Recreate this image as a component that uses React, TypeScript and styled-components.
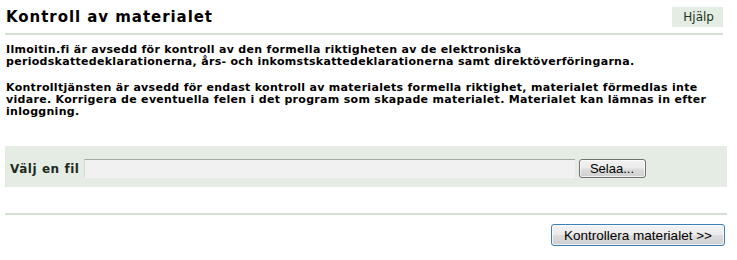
import styled, { createGlobalStyle } from 'styled-components'

const GlobalStyle = createGlobalStyle`
  html, body {
    margin: 0;
    padding: 0;
    background: #ffffff;
  }
  body {
    font-family: "DejaVu Sans", Verdana, sans-serif;
    color: #000;
  }
`

const App = () => {
  return (
    <>
      <GlobalStyle />
      <Page>
        <Header>
          <Title>Kontroll av materialet</Title>
          <HelpLink>Hjälp</HelpLink>
        </Header>
        <Text>
          Ilmoitin.fi är avsedd för kontroll av den formella riktigheten av de elektroniska
          <br />
          periodskattedeklarationerna, års- och inkomstskattedeklarationerna samt direktöverföringarna.
        </Text>
        <Text>
          Kontrolltjänsten är avsedd för endast kontroll av materialets formella riktighet, materialet förmedlas inte
          <br />
          vidare. Korrigera de eventuella felen i det program som skapade materialet. Materialet kan lämnas in efter
          <br />
          inloggning.
        </Text>
        <FileBox>
          <Label>Välj en fil</Label>
          <FileField />
          <Button>Selaa...</Button>
        </FileBox>
        <Divider />
        <Actions>
          <Button $wide>Kontrollera materialet &gt;&gt;</Button>
        </Actions>
      </Page>
    </>
  )
}

const Page = styled.div`
  width: 722px;
  padding: 7px 0 0 5px;
`

const Header = styled.div`
  display: flex;
  justify-content: space-between;
  align-items: center;
  border-bottom: 2px solid #d2dfd2;
  padding: 0 0 6px 1px;
  margin-right: 4px;
`

const Title = styled.h1`
  margin: 0;
  font-size: 15px;
  font-weight: bold;
  letter-spacing: 0.95px;
  line-height: 20px;
`

const HelpLink = styled.span`
  background: #e3ede3;
  color: #1f3322;
  font-size: 12px;
  line-height: 20px;
  padding: 0 9px 0 11px;
`

const Text = styled.p`
  margin: 9px 0 0 1px;
  font-size: 11px;
  font-weight: bold;
  line-height: 12px;
  letter-spacing: 0.3px;
  white-space: nowrap;
  & + & {
    margin-top: 14px;
  }
`

const FileBox = styled.div`
  display: flex;
  align-items: center;
  gap: 4px;
  margin-top: 28px;
  background: #e4ece4;
  height: 41px;
  padding: 4px 0 0 5px;
  box-sizing: border-box;
`

const Label = styled.span`
  font-size: 12px;
  font-weight: bold;
  color: #1c2a1e;
  letter-spacing: 0.55px;
`

const FileField = styled.div`
  width: 491px;
  height: 19px;
  background: #f1f1f1;
  border-top: 1px solid #a8a8a8;
  border-left: 1px solid #d8d8d8;
  border-bottom: 1px solid #f4f4f4;
  box-sizing: border-box;
`

const Button = styled.button<{ $wide?: boolean }>`
  font-family: "Liberation Sans", Arial, sans-serif;
  font-size: ${p => (p.$wide ? '13.5px' : '13px')};
  color: #000;
  height: ${p => (p.$wide ? '22px' : '19px')};
  width: ${p => (p.$wide ? '174px' : '67px')};
  padding: 0;
  border: 1px solid ${p => (p.$wide ? '#3c7fb1' : '#707070')};
  border-radius: 3px;
  background: linear-gradient(#f2f2f2 0%, #ebebeb 49%, #dddddd 51%, #cfcfcf 100%);
  box-shadow: inset 0 0 0 1px rgba(255, 255, 255, 0.7);
`

const Divider = styled.div`
  margin-top: 26px;
  border-top: 2px solid #d2dfd2;
`

const Actions = styled.div`
  display: flex;
  justify-content: flex-end;
  padding-top: 9px;
  margin-right: 2px;
`

export default App
